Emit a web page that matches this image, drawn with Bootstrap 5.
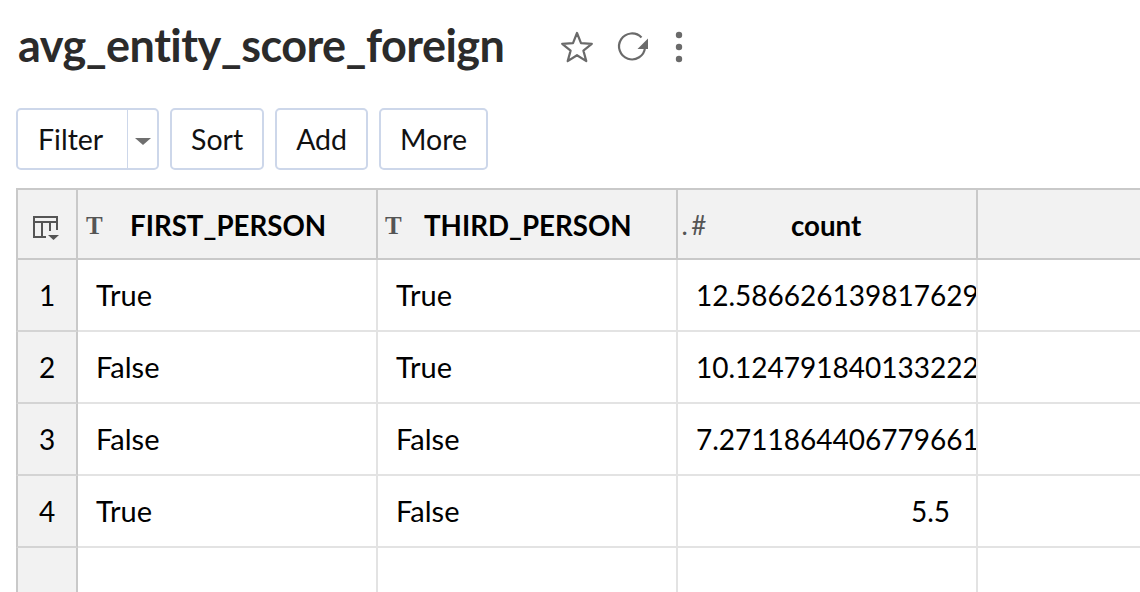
<!DOCTYPE html>
<html lang="en">
<head>
<meta charset="utf-8">
<title>avg_entity_score_foreign</title>
<link href="https://cdn.jsdelivr.net/npm/bootstrap@5.3.0/dist/css/bootstrap.min.css" rel="stylesheet">
<style>
html,body{height:592px;overflow:hidden;background:#fff}
body{font-family:Lato,"Liberation Sans",sans-serif;color:#000;padding:22px 0 0 16px}
.page-title{font-size:45px;line-height:46px;letter-spacing:-.53px;font-weight:700;color:#2b2b2b;margin:0 0 2px 2px;height:46px}
.title-tools{margin-left:56px;gap:22px;margin-top:2px}
.title-tools svg:last-child{margin-left:2px}
.toolbar{margin-top:38px;gap:11px;height:62px}
.tool-btn{font-family:inherit;font-size:28.5px;line-height:1;background:#fff;border:2px solid #cdd7ea;border-radius:5px;color:#111;padding:0 19px;height:62px}
.split-main{border-radius:5px 0 0 5px;border-right-width:1px;padding:0 0 0 20px;width:112px;text-align:left}
.split-caret{border-radius:0 5px 5px 0;border-left-width:1px;width:32px;padding:0;margin-left:-1px}
.caret-shape{display:block;margin:4px auto 0;width:0;height:0;border-left:8px solid transparent;border-right:8px solid transparent;border-top:7px solid #6f6f6f}
.grid-wrap{margin-top:18px;width:1124px;overflow:hidden;height:404px}
.sheet{table-layout:fixed;border-collapse:separate;border-spacing:0;width:1240px;font-size:29px}
.sheet th,.sheet td{padding:0;border-right:2px solid #e3e3e3;border-bottom:2px solid #e3e3e3;height:72px;white-space:nowrap;overflow:hidden;font-weight:400;vertical-align:middle}
.sheet thead th{height:72px;background:#f2f2f2;border-top:2px solid #c9c9c9;border-bottom:2px solid #c9c9c9;border-right-color:#c9c9c9;font-weight:700;font-size:27.7px}
.sheet thead tr th:first-child,.sheet tbody tr td:first-child{background:#f2f2f2;border-left:2px solid #c9c9c9;border-right:2px solid #c9c9c9;text-align:center;font-size:28px}
.sheet tbody tr td:first-child{border-bottom-color:#d4d4d4}
.head-inner{display:flex;align-items:center;padding:3px 0 0 8px}
.head-inner.third{padding-left:7px}
.type-t{font-family:"Liberation Serif",serif;font-weight:700;font-size:25px;line-height:1;color:#555;width:44px;flex:none}
.head-inner.third .type-t{width:39px}
.type-num{font-weight:400;color:#555;width:109px;flex:none;font-size:26px;line-height:1}
.num-dot{font-size:22px;font-weight:700;margin-right:4px}
.cell-text{padding-left:18px !important}
.cell-num{padding-left:18px !important;font-size:28px}
.cell-right{text-align:right;padding-right:26px !important;font-size:28px}
.blank-row td{height:60px;border-bottom:0 !important}
</style>
</head>
<body>
<div class="d-flex align-items-center">
  <h1 class="page-title">avg_entity_score_foreign</h1>
  <div class="title-tools d-flex align-items-center">
    <svg width="34" height="34" viewBox="0 0 34 34" aria-hidden="true"><path d="M17 3l4 10.2 10.8.6-8.4 6.8 2.9 10.5L17 25.2l-9.3 5.9 2.9-10.5-8.4-6.8 10.8-.6z" fill="none" stroke="#6a6a6a" stroke-width="2.2" stroke-linejoin="round"/></svg>
    <svg width="34" height="34" viewBox="0 0 34 34" aria-hidden="true"><path d="M29 17.5A13 13 0 1 1 25.5 7.5" fill="none" stroke="#6a6a6a" stroke-width="2.2"/><path d="M32 8.5V19H21.5z" fill="#6a6a6a"/></svg>
    <svg width="10" height="34" viewBox="0 0 10 34" aria-hidden="true"><circle cx="5" cy="5" r="3.2" fill="#6a6a6a"/><circle cx="5" cy="17" r="3.2" fill="#6a6a6a"/><circle cx="5" cy="29" r="3.2" fill="#6a6a6a"/></svg>
  </div>
</div>
<div class="toolbar d-flex">
  <div class="d-flex">
    <button type="button" class="tool-btn split-main">Filter</button>
    <button type="button" class="tool-btn split-caret" aria-label="Filter options"><span class="caret-shape"></span></button>
  </div>
  <button type="button" class="tool-btn">Sort</button>
  <button type="button" class="tool-btn">Add</button>
  <button type="button" class="tool-btn">More</button>
</div>
<div class="grid-wrap">
  <table class="sheet">
    <colgroup><col style="width:62px"><col style="width:300px"><col style="width:300px"><col style="width:300px"><col style="width:278px"></colgroup>
    <thead>
      <tr>
        <th><svg width="28" height="26" viewBox="0 0 28 26" aria-hidden="true"><path d="M1 2h23v5H1zM1 7v15h12M24 7v8M9 7v15M17 7v9" fill="none" stroke="#555" stroke-width="2"/><path d="M15 20h11l-5.500 5z" fill="#555"/></svg></th>
        <th><div class="head-inner"><span class="type-t">T</span>FIRST_PERSON</div></th>
        <th><div class="head-inner third"><span class="type-t">T</span>THIRD_PERSON</div></th>
        <th><div class="head-inner ps-1"><span class="type-num"><span class="num-dot">.</span>#</span>count</div></th>
        <th></th>
      </tr>
    </thead>
    <tbody>
      <tr><td>1</td><td class="cell-text">True</td><td class="cell-text">True</td><td class="cell-num">12.586626139817629</td><td></td></tr>
      <tr><td>2</td><td class="cell-text">False</td><td class="cell-text">True</td><td class="cell-num">10.124791840133222</td><td></td></tr>
      <tr><td>3</td><td class="cell-text">False</td><td class="cell-text">False</td><td class="cell-num">7.2711864406779661</td><td></td></tr>
      <tr><td>4</td><td class="cell-text">True</td><td class="cell-text">False</td><td class="cell-right">5.5</td><td></td></tr>
      <tr class="blank-row"><td></td><td></td><td></td><td></td><td></td></tr>
    </tbody>
  </table>
</div>
<script src="https://cdn.jsdelivr.net/npm/bootstrap@5.3.0/dist/js/bootstrap.bundle.min.js"></script>
</body>
</html>
